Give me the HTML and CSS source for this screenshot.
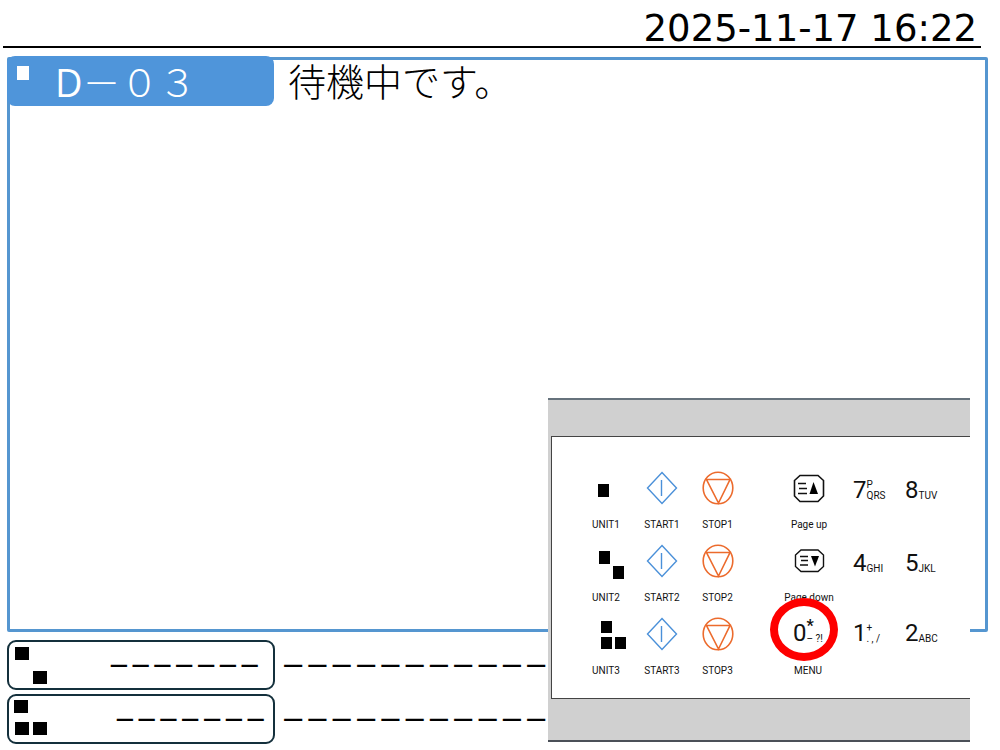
FILE: index.html
```html
<!DOCTYPE html>
<html lang="ja">
<head>
    <meta charset="UTF-8">
    <meta name="viewport" content="width=device-width, initial-scale=1.0">
    <title>D-03</title>
    <link rel="stylesheet" href="styles.css">
</head>
<body>
    <!-- Shared icon shapes -->
    <svg class="sprite" aria-hidden="true">
        <symbol id="start" viewBox="0 0 32 34">
            <path d="M16 1.5L30.5 17L16 32.5L1.5 17Z M15.5 9V25" fill="none" stroke="#4a90d9" stroke-width="1.4"/>
        </symbol>
        <symbol id="stop" viewBox="0 0 32 34">
            <ellipse cx="16" cy="17" rx="14.8" ry="15.8" fill="none" stroke="#ec6b2d" stroke-width="1.6"/>
            <path d="M4.5 8.5H28L16.5 32Z" fill="none" stroke="#ec6b2d" stroke-width="1.6"/>
        </symbol>
    </svg>

    <header class="top-bar">
        <time datetime="2025-11-17T16:22">2025-11-17 16:22</time>
    </header>

    <main class="unit-panel">
        <div class="unit-tab">
            <span class="unit-mark"></span>
            <span class="unit-code"><b>D</b>－０３</span>
        </div>
        <p class="unit-message">待機中です。</p>
    </main>

    <!-- Other units -->
    <section class="unit-list">
        <div class="unit-row">
            <div class="unit-box">
                <svg class="box-mark" width="34" height="42" viewBox="0 0 34 42"><path d="M1 4h14v13H1zM19 28h14v13H19z"/></svg>
                <span class="box-code">−−−−−−−</span>
            </div>
            <span class="row-message">−−−−−−−−−−−</span>
        </div>
        <div class="unit-row">
            <div class="unit-box">
                <svg class="box-mark" width="34" height="42" viewBox="0 0 34 42"><path d="M0 3h14v13H0zM1 25h14v13H1zM19 25h14v13H19z"/></svg>
                <span class="box-code box-code-wide">−−−−−−−</span>
            </div>
            <span class="row-message">−−−−−−−−−−−</span>
        </div>
    </section>

    <!-- Keypad lies over the lower right of the screen -->
    <section class="keypad">
        <div class="keys">
            <button class="key" type="button">
                <svg class="icon" width="32" height="34" viewBox="0 0 32 34"><path d="M8 13h11v13H8z"/></svg>
                <span>UNIT1</span>
            </button>
            <button class="key" type="button"><svg class="icon" width="32" height="34"><use href="#start"/></svg><span>START1</span></button>
            <button class="key" type="button"><svg class="icon" width="32" height="34"><use href="#stop"/></svg><span>STOP1</span></button>
            <button class="key page-key" type="button">
                <svg class="icon" width="32" height="34" viewBox="0 0 32 34">
                    <path d="M7 4.5H25L30.5 9.5V25L25 30.5H7L1.5 25V9.5Z M5 12.5H13 M6 17.5H14 M5 22.5H14" fill="none" stroke="#111" stroke-width="1.6"/>
                    <path d="M20.5 11L25 23H16.5Z"/>
                </svg>
                <span>Page up</span>
            </button>
            <button class="key num-key" type="button"><span class="num">7</span><span class="letters">P<br>QRS</span></button>
            <button class="key num-key" type="button"><span class="num">8</span><span class="letters">TUV</span></button>

            <button class="key" type="button">
                <svg class="icon" width="32" height="34" viewBox="0 0 32 34"><path d="M9 7h11v13H9zM23 22h11v13H23z"/></svg>
                <span>UNIT2</span>
            </button>
            <button class="key" type="button"><svg class="icon" width="32" height="34"><use href="#start"/></svg><span>START2</span></button>
            <button class="key" type="button"><svg class="icon" width="32" height="34"><use href="#stop"/></svg><span>STOP2</span></button>
            <button class="key page-key" type="button">
                <svg class="icon" width="32" height="34" viewBox="0 0 32 34">
                    <path d="M8 6H25L30.5 11V22.5L25 27.5H8L2.5 22.5V11Z M7 12.5H15 M8 16.5H15 M7 21H15" fill="none" stroke="#111" stroke-width="1.4"/>
                    <path d="M18 12H26L22 22.5Z"/>
                </svg>
                <span>Page down</span>
            </button>
            <button class="key num-key" type="button"><span class="num">4</span><span class="letters">GHI</span></button>
            <button class="key num-key" type="button"><span class="num">5</span><span class="letters">JKL</span></button>

            <button class="key" type="button">
                <svg class="icon" width="32" height="34" viewBox="0 0 32 34"><path d="M11 4h11v12H11zM11 20h11v12H11zM25 20h11v12H25z"/></svg>
                <span>UNIT3</span>
            </button>
            <button class="key" type="button"><svg class="icon" width="32" height="34"><use href="#start"/></svg><span>START3</span></button>
            <button class="key" type="button"><svg class="icon" width="32" height="34"><use href="#stop"/></svg><span>STOP3</span></button>
            <button class="key menu-key" type="button">
                <span class="menu-num"><span class="num">0</span><span class="letters"><b>*</b><br>– ?!</span></span>
                <span>MENU</span>
            </button>
            <button class="key num-key last-row" type="button"><span class="num">1</span><span class="letters">+<br>. , /</span></button>
            <button class="key num-key last-row" type="button"><span class="num">2</span><span class="letters">ABC</span></button>
        </div>
    </section>
</body>
</html>
```

FILE: styles.css
```css
*,
*::after {
    box-sizing: border-box;
}

body {
    margin: 0;
    min-height: 100vh;
    padding: 12px 12px 6px 7px;
    display: flex;
    flex-direction: column;
    position: relative;
    background: #fff;
    color: #000;
    font-family: "Noto Sans CJK JP", sans-serif;
}

.sprite {
    position: absolute;
    width: 0;
    height: 0;
}

.top-bar {
    margin: 0 7px 9px -4px;
    padding-right: 4px;
    border-bottom: 2px solid #000;
    text-align: right;
    font-family: "DejaVu Sans", sans-serif;
    font-size: 37px;
    line-height: 34px;
}

.top-bar time {
    display: block;
}

/* Active unit */
.unit-panel {
    flex: 1;
    display: flex;
    align-items: flex-start;
    border: 3px solid #5596d0;
    border-radius: 2px;
}

.unit-tab {
    display: flex;
    width: 267px;
    height: 50px;
    margin: -4px 0 0 -3px;
    padding-left: 10px;
    background: #4f95da;
    border-radius: 8px;
    color: #fff;
}

.unit-mark {
    width: 12px;
    height: 14px;
    margin: 10px 26px 0 0;
    background: #fff;
}

.unit-code {
    font-size: 38px;
    font-weight: 300;
    line-height: 50px;
    white-space: nowrap;
}

.unit-code b {
    font-family: "Open Sans", sans-serif;
    font-weight: 500;
}

.unit-message {
    margin: 0 0 0 14px;
    font-size: 38px;
    font-weight: 300;
    line-height: 40px;
}

/* Waiting units */
.unit-list {
    display: flex;
    flex-direction: column;
    gap: 4px;
    margin-top: 8px;
    font-family: "DejaVu Sans", sans-serif;
}

.unit-row {
    display: flex;
    align-items: center;
    gap: 6px;
    white-space: nowrap;
}

.unit-box {
    display: flex;
    flex-shrink: 0;
    width: 268px;
    height: 50px;
    padding: 1px 5px;
    border: 2px solid #14303c;
    border-radius: 9px;
}

.box-mark {
    flex-shrink: 0;
}

.box-code {
    margin-left: 60px;
    font-size: 26px;
    line-height: 44px;
}

.box-code-wide {
    margin-left: 66px;
}

.row-message {
    font-size: 29px;
    line-height: 46px;
}

/* Keypad */
.keypad {
    position: absolute;
    right: 30px;
    bottom: 8px;
    width: 422px;
    padding: 36px 0 41px 3px;
    background: #d0d0d0;
    border-top: 2px solid #66727c;
    border-bottom: 2px solid #4b5058;
}

.keys {
    display: grid;
    grid-template-columns: 56px 56px 55px 108px 52px 52px;
    row-gap: 13px;
    padding: 34px 0 21px 26px;
    background: #fff;
    border: 1px solid #444;
    border-right: 0;
}

.key {
    display: flex;
    flex-direction: column;
    align-items: center;
    gap: 14px;
    height: 60px;
    padding: 0;
    border: 0;
    background: none;
    color: #111;
    font-family: Roboto, sans-serif;
    font-size: 10px;
    line-height: 12px;
    white-space: nowrap;
    cursor: pointer;
}

.icon {
    overflow: visible;
}

.page-key {
    padding-left: 20px;
}

.num-key,
.menu-num {
    display: flex;
    flex-direction: row;
    align-items: flex-end;
    gap: 0;
    height: 34px;
}

.num {
    font-size: 24px;
    line-height: 30px;
}

.letters {
    padding-bottom: 4px;
    line-height: 11px;
    text-align: left;
}

.letters b {
    font-size: 16px;
}

.last-row,
.menu-num {
    padding-bottom: 3px;
}

.menu-key {
    padding-left: 18px;
}

.menu-num {
    position: relative;
}

/* Red ring marking the menu key */
.menu-num::after {
    content: "";
    position: absolute;
    top: 50%;
    left: 50%;
    width: 68px;
    height: 63px;
    margin: -36px 0 0 -38px;
    border: 8px solid #fe0000;
    border-radius: 50%;
}
```
